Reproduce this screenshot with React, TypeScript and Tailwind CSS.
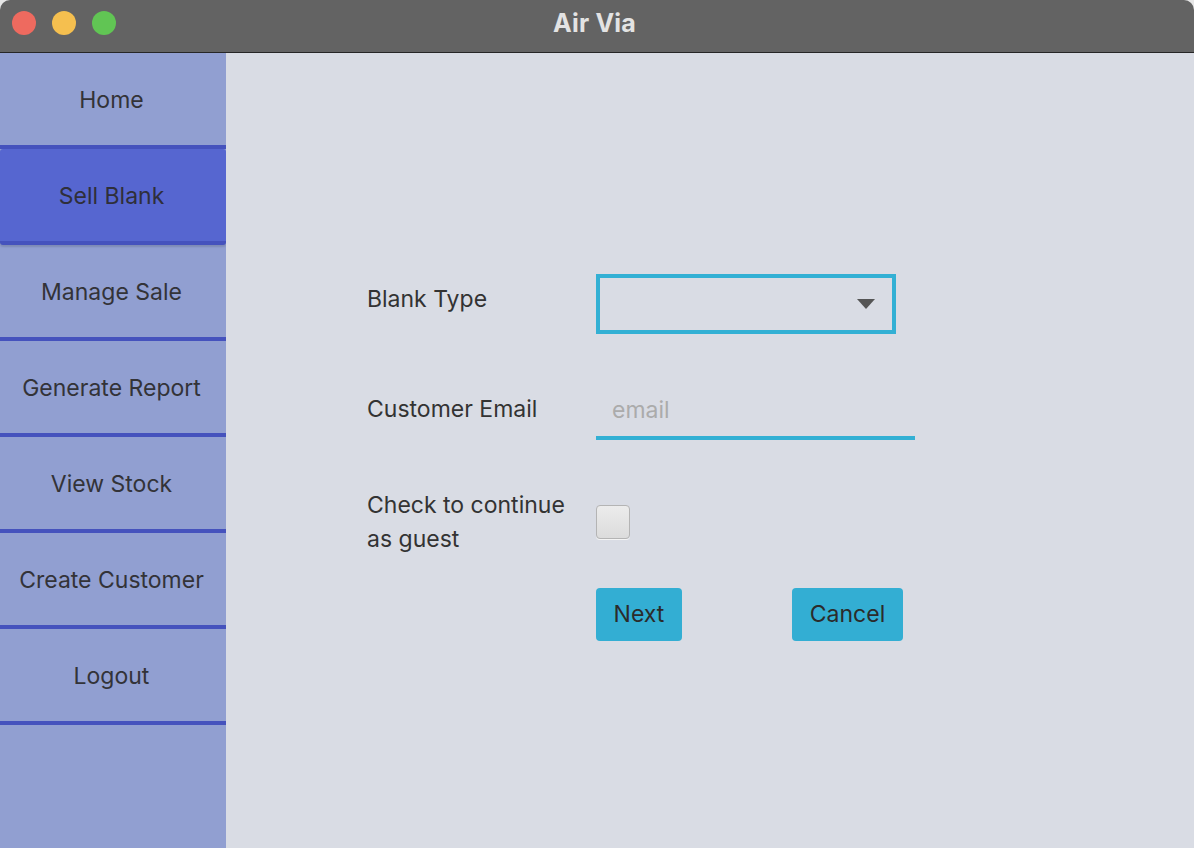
import React from 'react';

const navItems = [
  'Home',
  'Sell Blank',
  'Manage Sale',
  'Generate Report',
  'View Stock',
  'Create Customer',
  'Logout',
];

function TitleBar() {
  return (
    <div className="relative flex h-[53px] shrink-0 items-center justify-center rounded-t-[10px] border-b border-[#262626] bg-[#636363]">
      <div className="absolute left-[12px] top-[11px] flex gap-[16px]">
        <span className="h-[24px] w-[24px] rounded-full bg-[#ee6a5f]" />
        <span className="h-[24px] w-[24px] rounded-full bg-[#f5bf4f]" />
        <span className="h-[24px] w-[24px] rounded-full bg-[#61c554]" />
      </div>
      <span className="pb-[4px] pr-[5px] text-[25px] font-bold tracking-[0.2px] text-[#e3e3e3]">Air Via</span>
    </div>
  );
}

function Sidebar({ active }: { active: string }) {
  return (
    <nav className="flex w-[226px] shrink-0 flex-col bg-[#919fd1]">
      {navItems.map((label) =>
        label === active ? (
          <div
            key={label}
            className="flex h-[96px] items-center justify-center rounded-[3px] border-b-4 border-[#4552bd] bg-[#5666d0] pr-[3px] pt-[2px] text-[23px] text-[#2f2f3a] shadow-[0_2px_2px_#00000022]"
          >
            {label}
          </div>
        ) : (
          <div
            key={label}
            className="flex h-[96px] items-center justify-center border-b-4 border-[#4552bd] pr-[3px] pt-[2px] text-[23px] text-[#333338]"
          >
            {label}
          </div>
        ),
      )}
    </nav>
  );
}

function SellBlankForm() {
  return (
    <main className="flex flex-1 flex-col bg-[#d9dce4] pl-[141px] pt-[221px] text-[23px] text-[#333333]">
      <div className="flex h-[60px] items-center">
        <label className="w-[229px] pb-[10px]">Blank Type</label>
        <div className="flex h-[60px] w-[300px] items-center justify-end border-4 border-[#33b0d4] pr-[17px]">
          <svg width="18" height="10" viewBox="0 0 18 10">
            <path d="M0 0 L18 0 L9 10 Z" fill="#555555" />
          </svg>
        </div>
      </div>

      <div className="mt-[50px] flex h-[56px] items-center">
        <label className="w-[229px] pb-[6px]">Customer Email</label>
        <div className="flex h-[56px] w-[319px] items-center border-b-4 border-[#33b0d4] pl-[16px]">
          <span className="text-[#ababab]">email</span>
        </div>
      </div>

      <div className="mt-[48px] flex items-center">
        <label className="w-[229px] leading-[34px]">
          Check to continue
          <br />
          as guest
        </label>
        <span className="h-[34px] w-[34px] rounded-[4px] border border-[#b4b4b4] bg-gradient-to-b from-[#ececec] to-[#dcdcdc] shadow-[0_1px_0_#f4f4f4]" />
      </div>

      <div className="ml-[229px] mt-[32px] flex gap-[110px]">
        <button className="h-[53px] w-[86px] rounded-[4px] bg-[#33aed3] text-[#2b2b2b]">Next</button>
        <button className="h-[53px] w-[111px] rounded-[4px] bg-[#33aed3] text-[#2b2b2b]">Cancel</button>
      </div>
    </main>
  );
}

export default function App() {
  return (
    <div className="h-[848px] w-[1194px] overflow-hidden bg-[#e6e6e6] font-['Inter','Noto_Sans',sans-serif]">
      <div className="flex h-full flex-col">
        <TitleBar />
        <div className="flex flex-1">
          <Sidebar active="Sell Blank" />
          <SellBlankForm />
        </div>
      </div>
    </div>
  );
}
